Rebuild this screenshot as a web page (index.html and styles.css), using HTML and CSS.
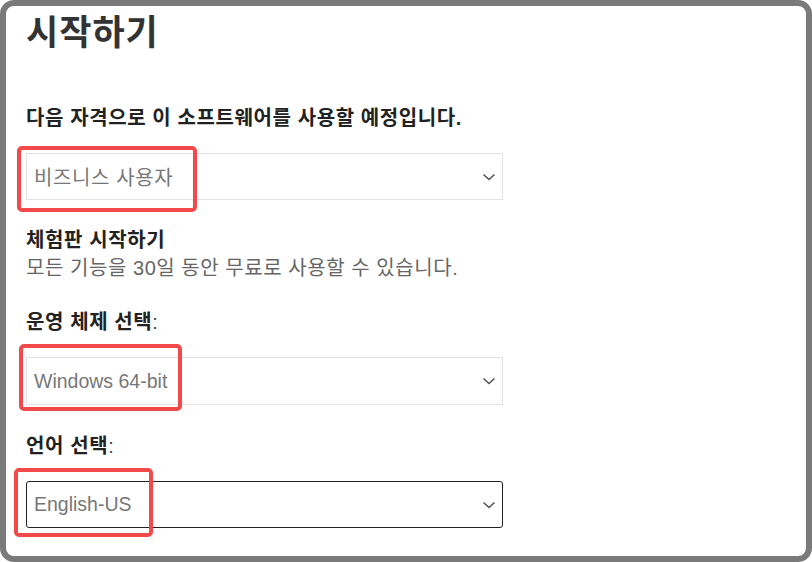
FILE: index.html
```html
<!DOCTYPE html>
<html lang="ko">
<head>
<meta charset="utf-8">
<title>시작하기</title>
<link rel="stylesheet" href="styles.css">
</head>
<body>
<div class="frame">
  <div class="content">
    <h1 class="title">시작하기</h1>
    <p class="label label-first">다음 자격으로 이 소프트웨어를 사용할 예정입니다.</p>
    <div class="select select-1">
      <span class="select-text ko">비즈니스 사용자</span>
      <svg class="chevron" width="14" height="8" viewBox="0 0 14 8"><path d="M1.5 1.5 L7 6.5 L12.5 1.5" fill="none" stroke="#555" stroke-width="1.6"/></svg>
    </div>
    <p class="label label-trial">체험판 시작하기</p>
    <p class="desc">모든 기능을 30일 동안 무료로 사용할 수 있습니다.</p>
    <p class="label label-os">운영 체제 선택<span class="colon">:</span></p>
    <div class="select select-2">
      <span class="select-text">Windows 64-bit</span>
      <svg class="chevron" width="14" height="8" viewBox="0 0 14 8"><path d="M1.5 1.5 L7 6.5 L12.5 1.5" fill="none" stroke="#555" stroke-width="1.6"/></svg>
    </div>
    <p class="label label-lang">언어 선택<span class="colon">:</span></p>
    <div class="select select-3 focused">
      <span class="select-text">English-US</span>
      <svg class="chevron" width="14" height="8" viewBox="0 0 14 8"><path d="M1.5 1.5 L7 6.5 L12.5 1.5" fill="none" stroke="#555" stroke-width="1.6"/></svg>
    </div>
  </div>
  <div class="mark mark-1"></div>
  <div class="mark mark-2"></div>
  <div class="mark mark-3"></div>
</div>
</body>
</html>
```
FILE: styles.css
```css
html, body {
  margin: 0;
  padding: 0;
  background: #ffffff;
}
body {
  font-family: "Liberation Sans", "Noto Sans CJK KR", sans-serif;
  color: #333;
}
.frame {
  position: relative;
  box-sizing: border-box;
  width: 812px;
  height: 562px;
  border: 6px solid #7a7a7a;
  border-radius: 14px;
  background: #fff;
  overflow: hidden;
}
.content {
  padding: 6px 0 0 20px;
  display: flex;
  flex-direction: column;
}
.title {
  margin: 0;
  font-size: 35px;
  line-height: 41px;
  font-weight: 700;
  color: #333;
  letter-spacing: 1px;
}
.label {
  margin: 0;
  font-size: 20px;
  line-height: 24px;
  font-weight: 700;
  color: #222;
  letter-spacing: 0.6px;
}
.colon {
  font-weight: 400;
  color: #444;
}
.label-first { margin-top: 53px; }
.label-trial { margin-top: 26px; line-height: 28px; }
.desc {
  margin: 0;
  font-size: 20px;
  line-height: 28px;
  color: #666;
  letter-spacing: 0.55px;
}
.label-os { margin-top: 28px; }
.label-lang { margin-top: 29px; }
.select {
  box-sizing: border-box;
  width: 477px;
  height: 47px;
  border: 1px solid #e2e2e2;
  display: flex;
  align-items: center;
  justify-content: space-between;
  padding: 0 6px 0 7px;
  background: #fff;
}
.select-1 { margin-top: 23px; }
.select-2 { margin-top: 23px; height: 48px; }
.select-3 { margin-top: 23px; }
.focused {
  border: 1px solid #222;
  border-radius: 3px;
}
.select-text {
  font-size: 19.5px;
  color: #777;
}
.select-text.ko {
  font-size: 20px;
  letter-spacing: 0.6px;
}
.chevron {
  display: block;
}
.mark {
  position: absolute;
  box-sizing: border-box;
  border: 4px solid #f24a4a;
  border-radius: 5px;
}
.mark-1 { left: 11px; top: 140px; width: 180px; height: 66px; }
.mark-2 { left: 13px; top: 338px; width: 163px; height: 67px; }
.mark-3 { left: 8px; top: 462px; width: 139px; height: 69px; }
```
